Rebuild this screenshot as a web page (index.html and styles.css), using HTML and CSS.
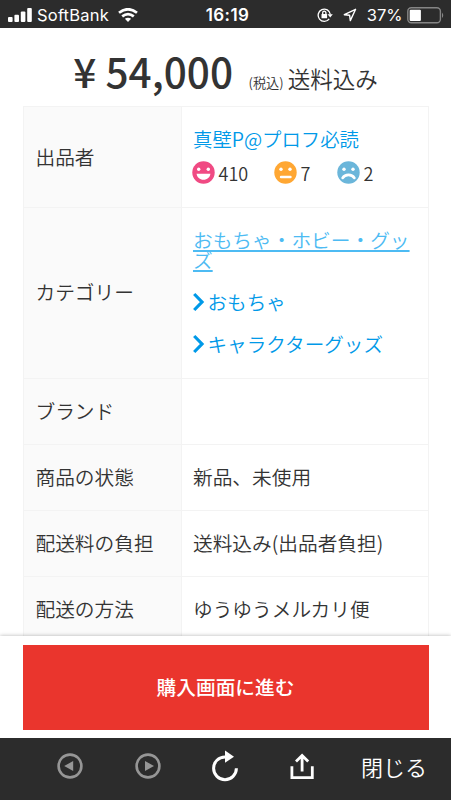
FILE: index.html
```html
<!DOCTYPE html>
<html lang="ja">
<head>
<meta charset="utf-8">
<meta name="viewport" content="width=device-width, initial-scale=1">
<title>購入</title>
<link rel="stylesheet" href="styles.css">
</head>
<body>
<div class="screen">
  <header class="status">
    <div class="status-left">
      <svg width="24" height="14" viewBox="0 0 24 14" fill="#fff"><rect x="0" y="9" width="4.6" height="5" rx="1"/><rect x="6.4" y="6.8" width="4.6" height="7.2" rx="1"/><rect x="12.8" y="3.6" width="4.6" height="10.4" rx="1"/><rect x="19.2" y="0" width="4.6" height="14" rx="1"/></svg>
      <span class="carrier">SoftBank</span>
      <svg class="wifi" width="20" height="14" viewBox="0 0 20 14" fill="none" stroke="#fff" stroke-width="2.7"><path d="M1 4.8Q10-2.3 19 4.8"/><path d="M4.2 8.4Q10 3.8 15.8 8.4"/><path d="M10 14L6.9 10.8Q10 8.5 13.1 10.8Z" fill="#fff" stroke="none"/></svg>
    </div>
    <span class="clock">16:19</span>
    <div class="status-right">
      <svg width="17" height="14" viewBox="0 0 17 14" fill="none" stroke="#fff" stroke-width="1.3"><path d="M12.2 10.8A6.1 6.1 0 1 1 13.3 6.4"/><path d="M10.6 6.2h5.2l-2.6 3.2z" fill="#fff" stroke="none"/><rect x="4.5" y="6" width="5.6" height="4.2" rx=".5" fill="#fff" stroke="none"/><path d="M5.7 6V4.8a1.6 1.6 0 0 1 3.2 0V6"/></svg>
      <svg class="locate" width="14" height="14" viewBox="0 0 14 14" fill="none" stroke="#fff" stroke-width="1.4" stroke-linejoin="round"><path d="M12.6 1.3L1.3 6.7 6.6 7.2 7.3 12.6Z"/></svg>
      <span class="percent">37%</span>
      <svg class="battery" width="38" height="17" viewBox="0 0 38 17"><rect x=".8" y=".8" width="32.6" height="15" rx="3.5" fill="none" stroke="#858585" stroke-width="1.4"/><rect x="2.7" y="2.7" width="11.2" height="11.2" rx="1" fill="#fff"/><path d="M35 5.5q2.5 2.8 0 5.6z" fill="#858585"/></svg>
    </div>
  </header>

  <main class="page">
    <div class="price-line"><span class="price">¥ 54,000</span><span class="tax">(税込)</span><span class="shipping">送料込み</span></div>
    <div class="details">
      <div class="label">出品者</div>
      <div class="value">
        <a class="seller">真壁P@プロフ必読</a>
        <div class="ratings">
          <span class="rating good"><svg width="23" height="23" viewBox="0 0 23 23"><circle cx="11.5" cy="11.5" r="11.2" fill="#f04a83"/><circle cx="6.7" cy="8.2" r="1.7" fill="#fff"/><circle cx="16.3" cy="8.2" r="1.7" fill="#fff"/><path d="M4.6 12.8h13.8c-.4 3.6-3.2 6-6.9 6s-6.5-2.4-6.9-6z" fill="#fff"/></svg>410</span>
          <span class="rating normal"><svg width="23" height="23" viewBox="0 0 23 23"><circle cx="11.5" cy="11.5" r="11.2" fill="#ffa733"/><circle cx="7" cy="8.2" r="1.7" fill="#fff"/><circle cx="16" cy="8.2" r="1.7" fill="#fff"/><path d="M7 16h9.5" stroke="#fff" stroke-width="2.4" stroke-linecap="round"/></svg>7</span>
          <span class="rating"><svg width="23" height="23" viewBox="0 0 23 23"><circle cx="11.5" cy="11.5" r="11.2" fill="#6bb6da"/><circle cx="7" cy="8.2" r="1.7" fill="#fff"/><circle cx="16" cy="8.2" r="1.7" fill="#fff"/><path d="M5.6 17c2.6-4.2 9.2-4.2 11.8 0" fill="none" stroke="#fff" stroke-width="2.6" stroke-linecap="round"/></svg>2</span>
        </div>
      </div>
      <div class="label">カテゴリー</div>
      <div class="value">
        <a class="category">おもちゃ・ホビー・グッズ</a>
        <a class="subcategory"><svg width="12" height="20" viewBox="0 0 12 20"><path d="M1.2 2l7.8 8-7.8 8" fill="none" stroke="#0099e8" stroke-width="3.2"/></svg>おもちゃ</a>
        <a class="subcategory"><svg width="12" height="20" viewBox="0 0 12 20"><path d="M1.2 2l7.8 8-7.8 8" fill="none" stroke="#0099e8" stroke-width="3.2"/></svg>キャラクターグッズ</a>
      </div>
      <div class="label">ブランド</div>
      <div class="value"></div>
      <div class="label">商品の状態</div>
      <div class="value">新品、未使用</div>
      <div class="label">配送料の負担</div>
      <div class="value">送料込み(出品者負担)</div>
      <div class="label">配送の方法</div>
      <div class="value">ゆうゆうメルカリ便</div>
    </div>
  </main>

  <div class="purchase"><button class="buy">購入画面に進む</button></div>

  <nav class="toolbar">
    <svg width="26" height="26" viewBox="0 0 26 26"><circle cx="13" cy="13" r="11.4" fill="none" stroke="#969696" stroke-width="2.6"/><path d="M7.2 13l9-5v10z" fill="#969696"/></svg>
    <svg width="26" height="26" viewBox="0 0 26 26"><circle cx="13" cy="13" r="11.4" fill="none" stroke="#969696" stroke-width="2.6"/><path d="M19 13l-9-5v10z" fill="#969696"/></svg>
    <svg class="reload" width="28" height="32" viewBox="0 0 28 32"><path d="M15 6.9h-1A11.4 11.4 0 1 0 25.4 18.3" fill="none" stroke="#fff" stroke-width="3"/><path d="M14 .5l9 6.3-9 6z" fill="#fff"/></svg>
    <svg class="share" width="24" height="27" viewBox="0 0 24 27" fill="none" stroke="#fff" stroke-width="2.8"><path d="M1.9 13.2v11.4h20.4V13.2"/><path d="M12.1 18.6V2.8M6 8.5l6.1-6.1 6.1 6.1"/></svg>
    <span class="close">閉じる</span>
  </nav>
</div>
</body>
</html>
```
FILE: styles.css
```css
* { box-sizing: border-box; }
body {
  margin: 0;
  background: #fff;
  color: #333;
  font-family: "Noto Sans CJK JP", sans-serif;
  font-size: 19.7px;
  font-weight: 350;
}
svg { display: block; flex: none; }
.screen {
  width: 451px;
  height: 800px;
  display: flex;
  flex-direction: column;
  overflow: hidden;
}
.status {
  flex: none;
  height: 28px;
  background: #2c2c2c;
  color: #fff;
  display: grid;
  grid-template-columns: 1fr auto 1fr;
  align-items: center;
  padding: 0 8px;
  font-family: Inter, sans-serif;
  font-size: 16.5px;
  font-weight: 400;
  line-height: 30px;
}
.status-left, .status-right { display: flex; align-items: center; }
.status-right { justify-content: flex-end; }
.carrier { margin-left: 5px; letter-spacing: .2px; }
.wifi { margin-left: 9px; }
.clock { font-weight: 600; font-size: 17px; padding-left: 4px; letter-spacing: .4px; }
.locate { margin-left: 9px; }
.percent { margin-left: 10px; }
.battery { margin: 1px -1.5px 0 4px; }

.page {
  flex: 1;
  min-height: 0;
  overflow: hidden;
  padding: 0 22.5px;
}
.price-line {
  height: 78px;
  display: flex;
  align-items: baseline;
  justify-content: center;
  line-height: 86px;
  white-space: nowrap;
}
.price { font-size: 40.5px; font-weight: 500; }
.tax { font-size: 13.2px; margin-left: 15.5px; }
.shipping { font-size: 22.5px; margin-left: 4px; }
.details {
  display: grid;
  grid-template-columns: 158px 1fr;
  grid-template-rows: 101.4px 170.2px repeat(4, 66.2px);
  border-top: 1.5px solid #f3f3f3;
  border-left: 1.5px solid #f3f3f3;
}
.label, .value {
  border-right: 1.5px solid #f3f3f3;
  border-bottom: 1.5px solid #f3f3f3;
  padding: 0 12px 1px;
  display: flex;
  flex-direction: column;
  justify-content: center;
  line-height: 20px;
}
.value { padding-left: 11.5px; }
.label { background: #fafafa; }
.seller { color: #0099e8; font-size: 19.4px; }
.ratings {
  display: flex;
  margin: 12px 0 0 -1px;
  font-size: 18px;
  font-weight: 350;
  height: 23px;
}
.rating { display: flex; align-items: center; gap: 3.5px; }
.good { width: 82px; }
.normal { width: 63px; }
.category {
  color: #4dbbf3;
  text-decoration: underline;
  text-decoration-thickness: 1.5px;
  text-underline-offset: 1.5px;
  width: 220px;
  word-break: break-all;
}
.subcategory {
  color: #0099e8;
  display: flex;
  align-items: center;
  gap: 3px;
  margin: 22px 0 0 -.5px;
  font-size: 19.6px;
}
.purchase {
  flex: none;
  height: 102px;
  padding: 9px 22.5px 8.5px;
  box-shadow: 0 0 4px rgba(0, 0, 0, .3);
  background: #fff;
  position: relative;
}
.buy {
  display: block;
  width: 100%;
  height: 100%;
  border: 0;
  padding: 0 0 2px;
  background: #ea352d;
  color: #fff;
  font: 500 19.7px "Noto Sans CJK JP", sans-serif;
}
.toolbar {
  flex: none;
  height: 62px;
  position: relative;
  background: #2c2c2c;
  color: #fff;
  display: flex;
  align-items: center;
  padding: 0 24px 6px 57px;
}
.toolbar svg + svg { margin-left: 51.5px; }
.toolbar .reload { margin-left: 50.5px; }
.toolbar .share { margin-left: 51px; }
.close { margin-left: auto; font-size: 22px; line-height: 28px; padding-bottom: 1px; }
```
